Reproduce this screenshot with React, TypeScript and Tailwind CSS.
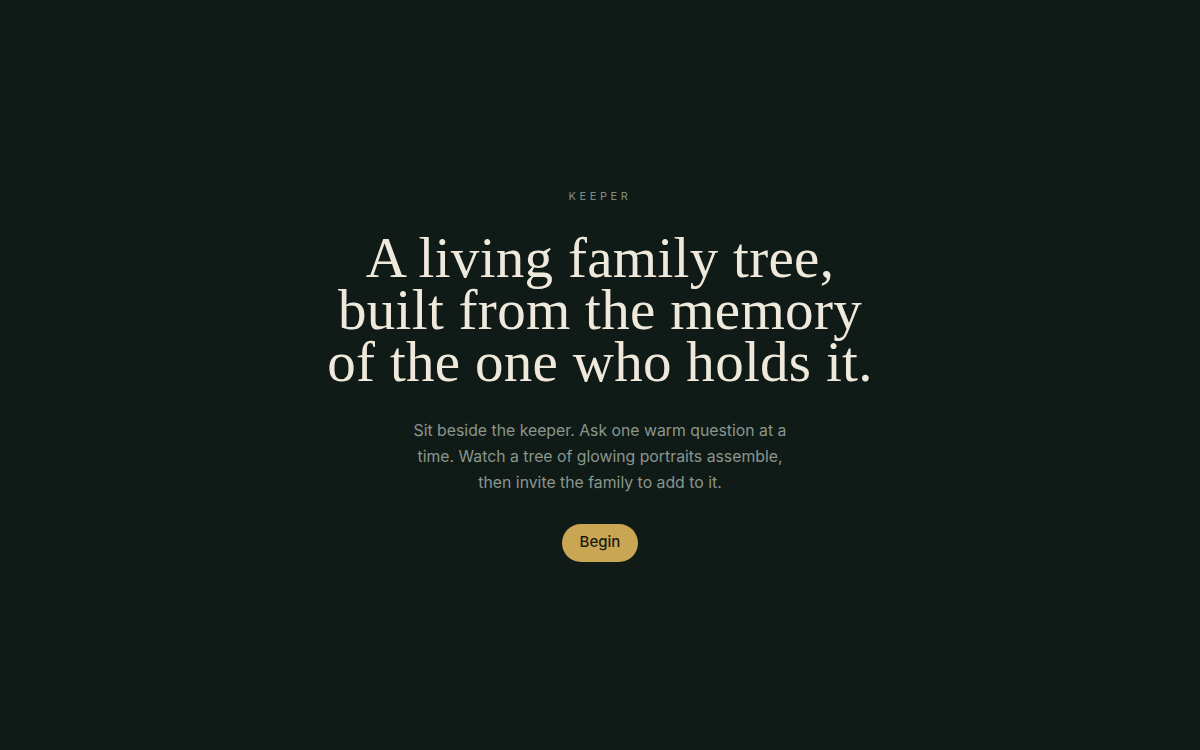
export default function App() {
  return (
    <div className="flex h-[750px] w-full flex-col items-center justify-center bg-[#101b17] text-center font-[Inter,'Liberation_Sans',sans-serif]">
      <div className="mt-[2px] text-[11px] uppercase leading-none tracking-[0.33em] text-[#7f8c83]">
        Keeper
      </div>
      <h1 className="mt-[30px] font-['Liberation_Serif','DejaVu_Serif',serif] text-[57px] leading-[52px] tracking-[0.3px] text-[#efe9dc]">
        A living family tree,
        <br />
        built from the memory
        <br />
        of the one who holds it.
      </h1>
      <p className="mt-[30px] max-w-[376px] text-[15.8px] leading-[26px] text-[#8a968d]">
        Sit beside the keeper. Ask one warm question at a time. Watch a tree of glowing portraits assemble, then invite the family to add to it.
      </p>
      <button className="mt-[28px] h-[38px] rounded-full bg-[#c9a654] px-[18px] text-[15px] font-medium text-[#1a1a12]">
        Begin
      </button>
    </div>
  );
}
